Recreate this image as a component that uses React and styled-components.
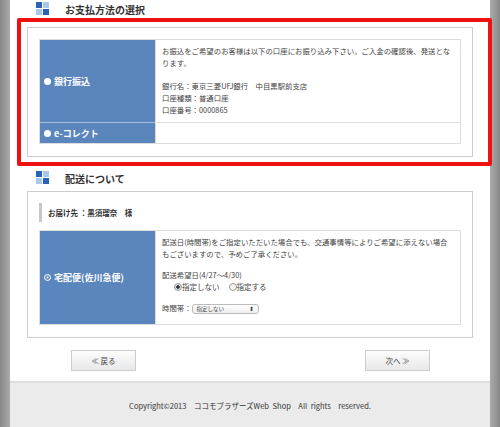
import React from 'react';
import styled, { createGlobalStyle } from 'styled-components';

const Global = createGlobalStyle`
  html, body { margin: 0; padding: 0; }
  body { background: #8c8c8c; font-family: "Noto Sans CJK JP", "Liberation Sans", sans-serif; color: #333; }
`;

const Frame = styled.div`
  width: 500px;
  height: 427px;
  padding: 0 10px;
  box-sizing: border-box;
  background: linear-gradient(90deg, #888 0, #aaa 10px, transparent 10px, transparent 490px, #aaa 490px, #888 500px);
  overflow: hidden;
`;

const Page = styled.div`
  background: #fff;
  height: 100%;
  display: flex;
  flex-direction: column;
`;

const Main = styled.div`
  padding: 0 17px 0 17px;
  flex: 1;
`;

const Heading = styled.div`
  display: flex;
  align-items: center;
  gap: 15px;
  padding-left: 9px;
  height: ${p => p.h || 18}px;
  margin-top: ${p => p.mt || 0}px;
  font-size: 10px;
  font-weight: bold;
  color: #333;
`;

const Highlight = styled.div`
  border: 4px solid #ee1111;
  border-radius: 2px;
  padding: 5px 6px;
  margin: 0 0 0 -10px;
  width: 455px;
`;

const Panel = styled.div`
  border: 1px solid #ccc;
  background: #fff;
  padding: 11px 11px 12px;
  margin-left: ${p => p.ml || 0}px;
  width: 446px;
  box-sizing: border-box;
`;

const Table = styled.div`
  display: grid;
  grid-template-columns: 115px 1fr;
  border: 1px solid #ddd;
`;

const Label = styled.div`
  background: #5a86bd;
  color: #fff;
  font-size: 9px;
  font-weight: bold;
  display: flex;
  align-items: center;
  gap: 3px;
  padding-left: 4px;
  min-height: ${p => p.h || 20}px;
  border-bottom: ${p => (p.last ? 'none' : '1px solid #a8bfdc')};
`;

const Dot = styled.span`
  width: 7px;
  height: 7px;
  border-radius: 50%;
  background: #fff;
  display: inline-block;
  box-sizing: border-box;
  border: ${p => (p.ring ? '1px solid #fff' : 'none')};
  ${p => p.ring && 'background: #5a86bd; box-shadow: inset 0 0 0 1.5px #5a86bd, inset 0 0 0 4px #fff;'}
`;

const Cell = styled.div`
  font-size: 7.4px;
  line-height: 12px;
  color: #444;
  padding: 5px 6px 6px;
  border-left: 1px solid #ddd;
  border-bottom: ${p => (p.last ? 'none' : '1px solid #ddd')};
`;

const Gap = styled.div`
  height: ${p => p.h}px;
`;

const Recipient = styled.div`
  border-left: 3px solid #c8c8c8;
  padding-left: 6px;
  font-size: 7.5px;
  font-weight: bold;
  height: 19px;
  display: flex;
  align-items: center;
  margin-bottom: 8px;
`;

const Radios = styled.div`
  display: flex;
  gap: 9px;
  padding-left: 12px;
  font-size: 7.5px;
  align-items: center;
`;

const Radio = styled.span`
  display: inline-flex;
  align-items: center;
`;

const RadioCircle = styled.span`
  width: 8px;
  height: 8px;
  border-radius: 50%;
  border: 1px solid #999;
  background: ${p => (p.on ? 'radial-gradient(circle, #333 0 1.5px, #cfe0f5 2px)' : '#f6f6f6')};
  box-sizing: border-box;
`;

const Select = styled.span`
  display: inline-flex;
  justify-content: space-between;
  align-items: center;
  width: 67px;
  height: 10px;
  border: 1px solid #bbb;
  border-radius: 3px;
  font-size: 5.5px;
  padding: 0 4px;
  box-sizing: border-box;
  background: linear-gradient(#fff, #eee);
  vertical-align: middle;
`;

const Buttons = styled.div`
  display: flex;
  justify-content: space-between;
  padding: 12px 43px 0 44px;
`;

const Button = styled.div`
  width: 63px;
  height: 19px;
  border: 1px solid #ccc;
  background: linear-gradient(#fdfdfd, #e8e8e8);
  font-size: 7.5px;
  display: flex;
  align-items: center;
  justify-content: center;
  color: #444;
`;

const Footer = styled.div`
  height: 44px;
  background: #ebebeb;
  border-top: 2px solid #dedede;
  display: flex;
  align-items: center;
  justify-content: center;
  font-size: 7.5px;
  color: #333;
  word-spacing: 2px;
`;

const SectionIcon = () => (
  <svg width="14" height="14" viewBox="0 0 14 14">
    <rect x="0" y="0" width="6" height="6" fill="#2a62b8" />
    <rect x="7" y="0" width="6" height="6" fill="#a9c8ee" />
    <rect x="0" y="7" width="6" height="6" fill="#a9c8ee" />
    <rect x="7" y="7" width="6" height="6" fill="#2a62b8" />
  </svg>
);

export default function App() {
  return (
    <>
      <Global />
      <Frame>
        <Page>
          <Main>
            <Heading h={18}>
              <SectionIcon />
              お支払方法の選択
            </Heading>
            <Highlight>
              <Panel>
                <Table>
                  <Label h={80}><Dot />銀行振込</Label>
                  <Cell>
                    お振込をご希望のお客様は以下の口座にお振り込み下さい。ご入金の確認後、発送となります。
                    <Gap h={11} />
                    銀行名：東京三菱UFJ銀行　中目黒駅前支店<br />
                    口座種類：普通口座<br />
                    口座番号：0000865
                  </Cell>
                  <Label h={20} last><Dot />e-コレクト</Label>
                  <Cell last />
                </Table>
              </Panel>
            </Highlight>
            <Heading h={20} mt={2}>
              <SectionIcon />
              配送について
            </Heading>
            <Panel style={{ marginTop: 3 }}>
              <Recipient>お届け先 ：黒須瑠奈　様</Recipient>
              <Table>
                <Label h={93} last><Dot ring />宅配便(佐川急便)</Label>
                <Cell last>
                  配送日(時間帯)をご指定いただいた場合でも、交通事情等によりご希望に添えない場合もございますので、予めご了承ください。
                  <Gap h={9} />
                  配送希望日(4/27〜4/30)
                  <Radios>
                    <Radio><RadioCircle on />指定しない</Radio>
                    <Radio><RadioCircle />指定する</Radio>
                  </Radios>
                  <Gap h={9} />
                  時間帯：<Select>指定しない<span>⬍</span></Select>
                </Cell>
              </Table>
            </Panel>
            <Buttons>
              <Button>≪ 戻る</Button>
              <Button>次へ ≫</Button>
            </Buttons>
          </Main>
          <Footer>Copyright©2013　ココモブラザーズWeb Shop　All rights　reserved.</Footer>
        </Page>
      </Frame>
    </>
  );
}
